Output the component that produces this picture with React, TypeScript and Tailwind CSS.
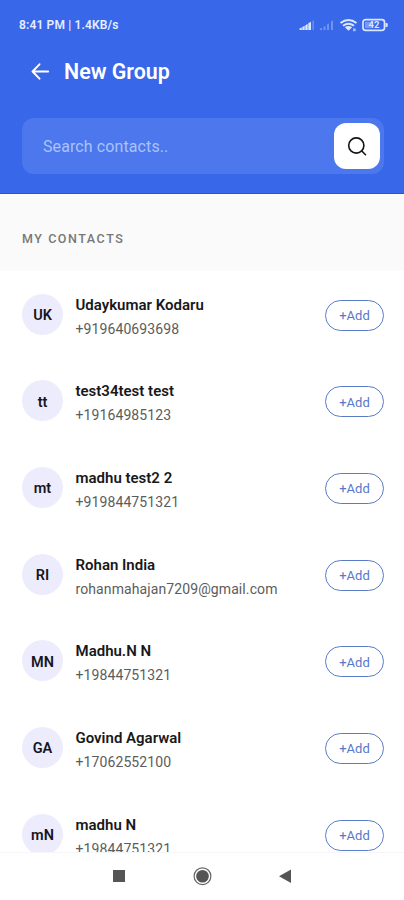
const contacts = [
  { initials: "UK", name: "Udaykumar Kodaru", detail: "+919640693698" },
  { initials: "tt", name: "test34test test", detail: "+19164985123" },
  { initials: "mt", name: "madhu test2 2", detail: "+919844751321" },
  { initials: "RI", name: "Rohan India", detail: "rohanmahajan7209@gmail.com" },
  { initials: "MN", name: "Madhu.N N", detail: "+19844751321" },
  { initials: "GA", name: "Govind Agarwal", detail: "+17062552100" },
  { initials: "mN", name: "madhu N", detail: "+19844751321" },
];

const StatusIcons = () => (
  <svg width="92" height="16" viewBox="0 0 92 16" fill="#dbe6ff">
    {/* mobile signal */}
    <path d="M1.500 13V11.500l2.300-1V13zM4.300 13v-3l2.400-1.200V13zM7.300 13V8.300l2.400-1.300v6zM10.300 13V6.200l2.700-1.500V13z" />
    <path d="M14.500 13V3.500h1.300V13z" opacity=".35" />
    <path d="M22 13V11.500l2-.8V13zM25.500 13v-3l2-1v4zM29 13V7.500l2-1V13zM33 13V4.500l2-1V13z" opacity=".35" />
    <g fill="none" stroke="#dbe6ff" strokeWidth="2">
      <path d="M42.500 6Q50.500 0 58.500 6" />
      <path d="M45 8.700Q50.500 4.700 56 8.700" />
    </g>
    <path d="M46.800 10.300Q50.500 7.800 54.200 10.300L50.500 13.800z" />
    <path d="M55 11.500h2.700v2.700H55z" opacity=".7" />
    <rect x="65" y="2.700" width="21.500" height="10.600" rx="2.600" fill="none" stroke="#dbe6ff" strokeWidth="1.700" />
    <rect x="67" y="4.700" width="6.500" height="6.600" rx=".5" opacity=".4" />
    <path d="M87.500 6h1.200q1 0 1 1v2q0 1-1 1h-1.200z" />
    <text x="76" y="11.300" fontSize="9.500" fontWeight="700" textAnchor="middle" fontFamily="Roboto, sans-serif">42</text>
  </svg>
);

const Header = () => (
  <header className="h-[194px] shrink-0 bg-[#3867ea] border-b border-[#1459df] text-white flex flex-col">
    <div className="h-[50px] flex items-center justify-between pl-[19px] pr-[14px]">
      <span className="text-[12px] tracking-[0.15px] font-semibold text-[#e6eeff] whitespace-nowrap">8:41 PM | 1.4KB/s</span>
      <StatusIcons />
    </div>
    <div className="h-[43px] flex items-center gap-[14px] pl-[31px]">
      <svg width="19" height="18" viewBox="0 0 19 18" fill="none" stroke="white" strokeWidth="1.900" strokeLinecap="round" strokeLinejoin="round">
        <path d="M17.200 8.500H1.500M8.500 1.300L1.500 8.500l7 7.200" />
      </svg>
      <h1 className="text-[21.400px] font-semibold leading-none">New Group</h1>
    </div>
    <div className="mt-[25px] ml-[22px] mr-[20px] h-[56px] flex items-center justify-between rounded-xl bg-[#4d77ed] pl-[21px] pr-[4px]">
      <span className="pt-px text-[16px] tracking-[0.1px] text-[#a9c3fb]">Search contacts..</span>
      <button className="w-[46px] h-[46px] rounded-xl bg-white flex items-center justify-center">
        <svg width="20" height="20" viewBox="0 0 20 20" fill="none" stroke="#161616" strokeWidth="1.600" strokeLinecap="round">
          <circle cx="9.300" cy="9.500" r="7.600" />
          <path d="M14.800 15L18.500 18.700" />
        </svg>
      </button>
    </div>
  </header>
);

const ContactRow = ({ initials, name, detail }: { initials: string; name: string; detail: string }) => (
  <li className="h-[86.67px] shrink-0 flex items-center pl-[22px] pr-[20px]">
    <div className="w-[41px] h-[41px] pt-[3px] rounded-full bg-[#ececfd] flex items-center justify-center text-[14.500px] font-semibold text-[#16161f]">
      {initials}
    </div>
    <div className="ml-[12.500px] pt-[5px] flex-1 flex flex-col gap-[4px]">
      <span className="text-[15px] leading-5 font-semibold text-[#18181b]">{name}</span>
      <span className="text-[14px] leading-5 tracking-[0.1px] text-[#5c5c5c]">{detail}</span>
    </div>
    <button className="mt-[2px] w-[59px] h-[31px] pt-px rounded-full border border-[#5b7cc8] text-[13px] text-[#5777ca]">+Add</button>
  </li>
);

const NavBar = () => (
  <nav className="h-[48px] shrink-0 bg-white border-t border-[#f6f6f6] flex justify-center">
    <svg width="190" height="47" viewBox="0 0 190 47" fill="#555">
      <rect x="6" y="17" width="12" height="12" />
      <circle cx="95.500" cy="23.200" r="6.300" />
      <circle cx="95.500" cy="23.200" r="8.400" fill="none" stroke="#666" strokeWidth="1.200" />
      <path d="M172 23.200L184 16.500v13.400z" />
    </svg>
  </nav>
);

const App = () => {
  return (
    <div className="w-full h-screen overflow-hidden flex flex-col bg-white font-['Roboto',sans-serif]">
      <Header />
      <main className="flex-1 min-h-0 overflow-hidden flex flex-col">
        <h2 className="h-[77px] shrink-0 bg-[#fafafa] pl-[22px] pt-[13px] flex items-center text-[12.500px] font-medium tracking-[1.550px] text-[#777777]">
          MY CONTACTS
        </h2>
        <ul className="flex flex-col">
          {contacts.map((contact, index) => (
            <ContactRow key={index} {...contact} />
          ))}
        </ul>
      </main>
      <NavBar />
    </div>
  );
};

export default App;
